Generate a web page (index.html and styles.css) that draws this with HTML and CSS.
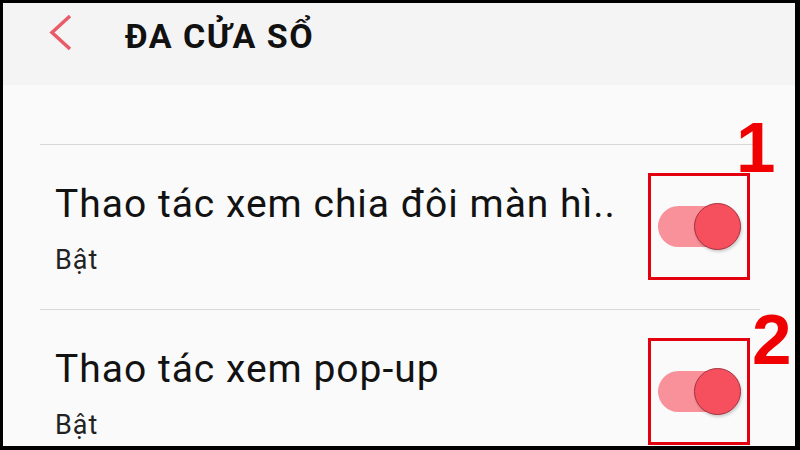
FILE: index.html
```html
<!DOCTYPE html>
<html lang="vi">
<head>
  <meta charset="UTF-8">
  <meta name="viewport" content="width=device-width, initial-scale=1.0">
  <title>Đa cửa sổ</title>
  <link rel="stylesheet" href="styles.css">
</head>
<body>
  <div class="screen">
    <header class="topbar">
      <svg class="back" width="24" height="40" viewBox="0 0 24 40">
        <polyline points="21,2 3,18.5 21,35" fill="none" stroke="#e85b67" stroke-width="3.5"/>
      </svg>
      <h1>ĐA CỬA SỔ</h1>
    </header>

    <div class="list">
      <div class="row">
        <div class="text">
          <div class="name">Thao tác xem chia đôi màn hì..</div>
          <div class="state">Bật</div>
        </div>
        <div class="mark"><span class="switch"><span class="knob"></span></span></div>
        <span class="num num-1">1</span>
      </div>

      <div class="row">
        <div class="text">
          <div class="name">Thao tác xem pop-up</div>
          <div class="state">Bật</div>
        </div>
        <div class="mark"><span class="switch"><span class="knob"></span></span></div>
        <span class="num num-2">2</span>
      </div>
    </div>
  </div>
</body>
</html>
```

FILE: styles.css
```css
body {
  margin: 0;
  font-family: Roboto, "Liberation Sans", sans-serif;
  background-color: #000;
}
.screen {
  box-sizing: border-box;
  width: 800px;
  height: 450px;
  border-style: solid;
  border-color: #000;
  border-width: 3px 5px 4px 3px;
  background-color: #fafafa;
  overflow: hidden;
}
.topbar {
  display: flex;
  align-items: flex-start;
  height: 82px;
  box-sizing: border-box;
  padding: 13px 0 0 46px;
  background-color: #f4f4f4;
}
.back {
  display: block;
  margin-top: -2px;
}
.topbar h1 {
  margin: 0 0 0 52px;
  font-size: 34px;
  line-height: 40px;
  font-weight: 700;
  letter-spacing: 1.5px;
  color: #111;
}
.list {
  margin: 0 35px 0 37px;
  padding-top: 59px;
}
.row {
  position: relative;
  display: flex;
  justify-content: space-between;
  align-items: flex-start;
  height: 165px;
  box-sizing: border-box;
  padding: 0 10px 0 15px;
  border-top: 1px solid #d8d8d8;
}
.text {
  padding-top: 36px;
}
.name {
  font-size: 39px;
  line-height: 46px;
  letter-spacing: 1px;
  color: #121212;
}
.state {
  margin-top: 16px;
  font-size: 27px;
  line-height: 34px;
  letter-spacing: 1px;
  color: #222;
}
.mark {
  display: flex;
  justify-content: center;
  align-items: center;
  box-sizing: border-box;
  width: 102px;
  height: 107px;
  margin-top: 28px;
  padding-left: 1px;
  border: 3px solid #e3000f;
}
.switch {
  position: relative;
  display: block;
  width: 83px;
  height: 47px;
}
.switch::before {
  content: "";
  position: absolute;
  left: 0;
  right: 6px;
  top: 3px;
  bottom: 3px;
  border-radius: 21px;
  background-color: #f8919a;
}
.knob {
  position: absolute;
  right: 0;
  top: 0;
  box-sizing: border-box;
  width: 47px;
  height: 47px;
  border-radius: 50%;
  border: 1px solid #a8303d;
  background-color: #f6505f;
  box-shadow: 1px 2px 3px rgba(0, 0, 0, 0.18);
}
.num {
  position: absolute;
  font-family: "Liberation Sans", Arial, sans-serif;
  font-weight: 700;
  font-size: 71px;
  line-height: 1;
  color: #f00000;
}
.num-1 {
  left: 696px;
  top: -33px;
}
.num-2 {
  left: 712px;
  top: -6px;
}
```
